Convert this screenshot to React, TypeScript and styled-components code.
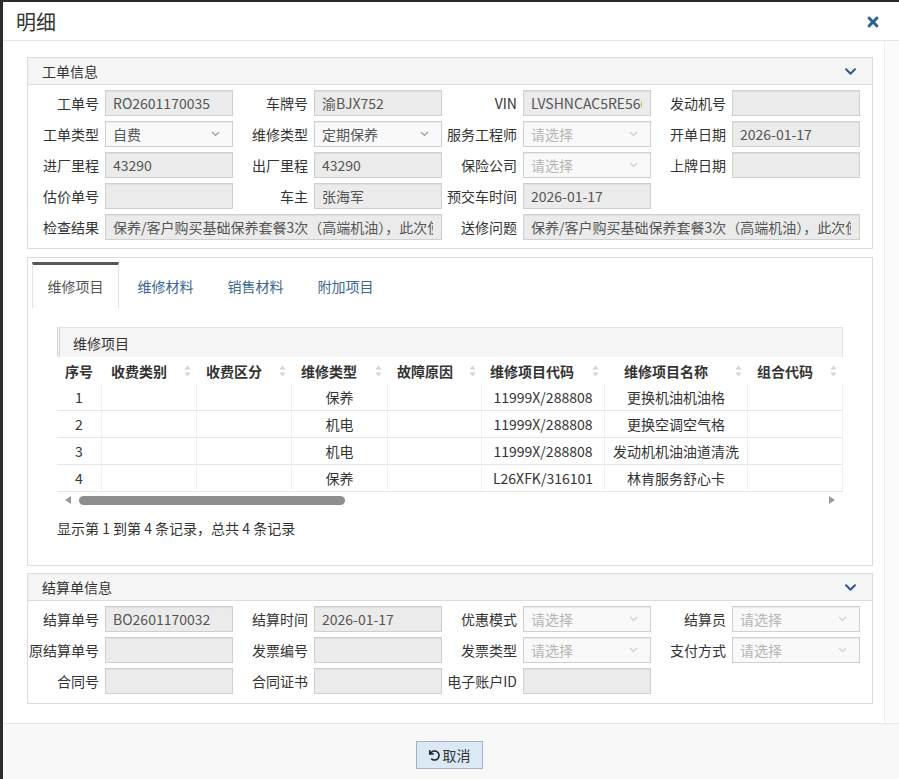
import React from "react";
import styled, { createGlobalStyle } from "styled-components";
import { FaTimes, FaChevronDown, FaUndo } from "react-icons/fa";

const GlobalStyle = createGlobalStyle`
  html, body {
    margin: 0;
    padding: 0;
    background: #2b2b2b;
    overflow: hidden;
  }
  body {
    font-family: "Noto Sans CJK SC", "Noto Sans", sans-serif;
    font-size: 14px;
    color: #333;
  }
`;

const Dialog = styled.div`
  margin: 2px 0 0 3px;
  width: 896px;
  height: 777px;
  background: #fff;
  display: flex;
  flex-direction: column;
`;

const Header = styled.div`
  height: 38px;
  flex: none;
  display: flex;
  align-items: center;
  justify-content: space-between;
  padding: 0 18px 0 13px;
  border-bottom: 1px solid #e6e6e6;
`;

const Title = styled.div`
  font-size: 20px;
  color: #333;
  line-height: 1;
  margin-top: 2px;
`;

const Close = styled.div`
  color: #2a6093;
  display: flex;
  margin-top: 1px;
`;

const Body = styled.div`
  flex: 1;
  display: flex;
  min-height: 0;
`;

const Content = styled.div`
  flex: 1;
  padding: 16px 11px 18px 24px;
  display: flex;
  flex-direction: column;
`;

const ScrollTrack = styled.div`
  width: 14px;
  flex: none;
  border-left: 1px solid #efefef;
  background: #fbfbfb;
`;

const Panel = styled.div<{ $gap?: number }>`
  border: 1px solid #dcdcdc;
  margin-top: ${(p) => p.$gap ?? 0}px;
  background: #fff;
`;

const PanelHead = styled.div`
  height: 26px;
  background: #f5f5f5;
  border-bottom: 1px solid #dcdcdc;
  display: flex;
  align-items: center;
  justify-content: space-between;
  padding: 0 15px 0 14px;
  color: #333;
`;

const Chevron = styled.div`
  color: #2b5b8b;
  display: flex;
`;

const FormGrid = styled.div<{ $bottom: number }>`
  display: grid;
  grid-template-columns: repeat(4, 205px);
  column-gap: 4px;
  row-gap: 5px;
  padding: 5px 0 ${(p) => p.$bottom}px 0;
`;

const Field = styled.div<{ $span?: number }>`
  display: flex;
  align-items: center;
  gap: 6px;
  min-width: 0;
  grid-column: span ${(p) => p.$span ?? 1};
`;

const Label = styled.div`
  width: 71px;
  flex: none;
  text-align: right;
  white-space: nowrap;
  color: #333;
`;

const Box = styled.div<{ $select?: boolean; $placeholder?: boolean }>`
  flex: 1;
  min-width: 0;
  height: 24px;
  border: 1px solid #cfcfcf;
  background: ${(p) => (p.$select ? "#f9f9f9" : "#ebebeb")};
  box-shadow: inset 0 1px 1px rgba(0, 0, 0, 0.06);
  display: flex;
  align-items: center;
  padding: 0 8px 0 7px;
  overflow: hidden;
  white-space: nowrap;
  color: ${(p) => (p.$placeholder ? "#b5b5b5" : "#555")};
`;

const BoxText = styled.div`
  flex: 1;
  min-width: 0;
  overflow: hidden;
  white-space: nowrap;
`;

const Caret = ({ light }: { light?: boolean }) => (
  <svg width="9" height="6" viewBox="0 0 9 6" style={{ flex: "none", marginRight: 4 }}>
    <polyline
      points="1,1 4.5,4.5 8,1"
      fill="none"
      stroke={light ? "#cfcfcf" : "#9a9a9a"}
      strokeWidth="1.2"
    />
  </svg>
);

type FieldDef = {
  label: string;
  value?: string;
  select?: boolean;
  span?: number;
};

const FormField = ({ f }: { f: FieldDef }) => {
  const placeholder = f.select && !f.value;
  return (
    <Field $span={f.span}>
      <Label>{f.label}</Label>
      <Box $select={f.select} $placeholder={placeholder}>
        <BoxText>{f.value ?? (f.select ? "请选择" : "")}</BoxText>
        {f.select && <Caret light={placeholder} />}
      </Box>
    </Field>
  );
};

const orderFields: FieldDef[] = [
  { label: "工单号", value: "RO2601170035" },
  { label: "车牌号", value: "渝BJX752" },
  { label: "VIN", value: "LVSHNCAC5RE566123" },
  { label: "发动机号" },
  { label: "工单类型", value: "自费", select: true },
  { label: "维修类型", value: "定期保养", select: true },
  { label: "服务工程师", select: true },
  { label: "开单日期", value: "2026-01-17" },
  { label: "进厂里程", value: "43290" },
  { label: "出厂里程", value: "43290" },
  { label: "保险公司", select: true },
  { label: "上牌日期" },
  { label: "估价单号" },
  { label: "车主", value: "张海军" },
  { label: "预交车时间", value: "2026-01-17" },
];

const problemText = "保养/客户购买基础保养套餐3次（高端机油），此次使用第1次";

const settleFields: FieldDef[] = [
  { label: "结算单号", value: "BO2601170032" },
  { label: "结算时间", value: "2026-01-17" },
  { label: "优惠模式", select: true },
  { label: "结算员", select: true },
  { label: "原结算单号" },
  { label: "发票编号" },
  { label: "发票类型", select: true },
  { label: "支付方式", select: true },
  { label: "合同号" },
  { label: "合同证书" },
  { label: "电子账户ID" },
];

const TabBar = styled.div`
  display: flex;
  gap: 3px;
  padding: 4px 0 0 4px;
  height: 46px;
`;

const Tab = styled.div<{ $active?: boolean }>`
  width: 87px;
  height: 46px;
  box-sizing: border-box;
  text-align: center;
  line-height: 43px;
  color: ${(p) => (p.$active ? "#555" : "#3a6791")};
  border-top: 3px solid ${(p) => (p.$active ? "#585858" : "transparent")};
  border-left: 1px solid ${(p) => (p.$active ? "#e2e2e2" : "transparent")};
  border-right: 1px solid ${(p) => (p.$active ? "#e2e2e2" : "transparent")};
  background: #fff;
`;

const TabContent = styled.div`
  padding: 19px 29px 27px 29px;
`;

const GridHead = styled.div`
  height: 29px;
  background: #f5f5f5;
  border: 1px solid #e2e2e2;
  border-bottom: none;
  border-left: 3px double #d6d6d6;
  display: flex;
  align-items: center;
  padding-left: 13px;
  color: #333;
`;

const Table = styled.div`
  display: grid;
  grid-template-columns: 45px 95px 95px 96px 94px 123px 143px 95px;
`;

const HeadCell = styled.div<{ $pad?: number }>`
  height: 27px;
  display: flex;
  align-items: center;
  justify-content: space-between;
  padding: 0 6px 0 ${(p) => p.$pad ?? 9}px;
  font-weight: 700;
  color: #333;
  white-space: nowrap;
  background: #fff;
`;

const Cell = styled.div<{ $center?: boolean }>`
  height: 26px;
  display: flex;
  align-items: center;
  justify-content: ${(p) => (p.$center ? "center" : "flex-start")};
  border-bottom: 1px solid #e6e6e6;
  border-right: 1px solid #f1f1f1;
  white-space: nowrap;
  color: #333;
`;

const SortIcon = () => (
  <svg width="7" height="12" viewBox="0 0 7 12" style={{ flex: "none" }}>
    <polygon points="3.5,0.5 6.5,4.5 0.5,4.5" fill="#d4d4d4" />
    <polygon points="0.5,7.5 6.5,7.5 3.5,11.5" fill="#d4d4d4" />
  </svg>
);

const HScroll = styled.div`
  height: 16px;
  display: flex;
  align-items: center;
  padding: 0 8px;
  gap: 8px;
`;

const Thumb = styled.div`
  width: 266px;
  height: 9px;
  border-radius: 5px;
  background: #8e8e8e;
`;

const ScrollSpace = styled.div`
  flex: 1;
`;

const Arrow = ({ dir }: { dir: "left" | "right" }) => (
  <svg width="6" height="8" viewBox="0 0 6 8">
    <polygon
      points={dir === "left" ? "6,0 6,8 0,4" : "0,0 0,8 6,4"}
      fill="#9a9a9a"
    />
  </svg>
);

const Summary = styled.div`
  margin-top: 10px;
  line-height: 20px;
  color: #333;
`;

const Footer = styled.div`
  height: 56px;
  flex: none;
  background: #f8f8f8;
  border-top: 1px solid #e6e6e6;
  display: flex;
  justify-content: center;
  padding-top: 17px;
  box-sizing: border-box;
`;

const Button = styled.div`
  width: 67px;
  height: 28px;
  box-sizing: border-box;
  border: 1px solid #a6b4c2;
  background: #dbe9f6;
  display: flex;
  align-items: center;
  justify-content: center;
  gap: 3px;
  color: #333;
  margin-right: 3px;
`;

type Row = {
  no: string;
  type: string;
  code: string;
  name: string;
};

const rows: Row[] = [
  { no: "1", type: "保养", code: "11999X/288808", name: "更换机油机油格" },
  { no: "2", type: "机电", code: "11999X/288808", name: "更换空调空气格" },
  { no: "3", type: "机电", code: "11999X/288808", name: "发动机机油油道清洗" },
  { no: "4", type: "保养", code: "L26XFK/316101", name: "林肯服务舒心卡" },
];

const headers: { title: string; sort: boolean; pad?: number }[] = [
  { title: "序号", sort: false, pad: 8 },
  { title: "收费类别", sort: true },
  { title: "收费区分", sort: true },
  { title: "维修类型", sort: true },
  { title: "故障原因", sort: true },
  { title: "维修项目代码", sort: true, pad: 8 },
  { title: "维修项目名称", sort: true, pad: 19 },
  { title: "组合代码", sort: true },
];

const tabs = ["维修项目", "维修材料", "销售材料", "附加项目"];

export default function App() {
  return (
    <>
      <GlobalStyle />
      <Dialog>
        <Header>
          <Title>明细</Title>
          <Close>
            <FaTimes size={16} />
          </Close>
        </Header>
        <Body>
          <Content>
            <Panel>
              <PanelHead>
                工单信息
                <Chevron>
                  <FaChevronDown size={13} />
                </Chevron>
              </PanelHead>
              <FormGrid $bottom={8}>
                {orderFields.map((f) => (
                  <FormField key={f.label} f={f} />
                ))}
                <div />
                <FormField f={{ label: "检查结果", value: problemText, span: 2 }} />
                <FormField f={{ label: "送修问题", value: problemText, span: 2 }} />
              </FormGrid>
            </Panel>

            <Panel $gap={8}>
              <TabBar>
                {tabs.map((t, i) => (
                  <Tab key={t} $active={i === 0}>
                    {t}
                  </Tab>
                ))}
              </TabBar>
              <TabContent>
                <GridHead>维修项目</GridHead>
                <Table>
                  {headers.map((h) => (
                    <HeadCell key={h.title} $pad={h.pad}>
                      {h.title}
                      {h.sort && <SortIcon />}
                    </HeadCell>
                  ))}
                  {rows.map((r) => (
                    <React.Fragment key={r.no}>
                      <Cell $center>{r.no}</Cell>
                      <Cell />
                      <Cell />
                      <Cell $center>{r.type}</Cell>
                      <Cell />
                      <Cell $center>{r.code}</Cell>
                      <Cell $center>{r.name}</Cell>
                      <Cell />
                    </React.Fragment>
                  ))}
                </Table>
                <HScroll>
                  <Arrow dir="left" />
                  <Thumb />
                  <ScrollSpace />
                  <Arrow dir="right" />
                </HScroll>
                <Summary>显示第 1 到第 4 条记录，总共 4 条记录</Summary>
              </TabContent>
            </Panel>

            <Panel $gap={7}>
              <PanelHead>
                结算单信息
                <Chevron>
                  <FaChevronDown size={13} />
                </Chevron>
              </PanelHead>
              <FormGrid $bottom={9}>
                {settleFields.map((f) => (
                  <FormField key={f.label} f={f} />
                ))}
              </FormGrid>
            </Panel>
          </Content>
          <ScrollTrack />
        </Body>
        <Footer>
          <Button>
            <FaUndo size={11} color="#222" />
            取消
          </Button>
        </Footer>
      </Dialog>
    </>
  );
}
